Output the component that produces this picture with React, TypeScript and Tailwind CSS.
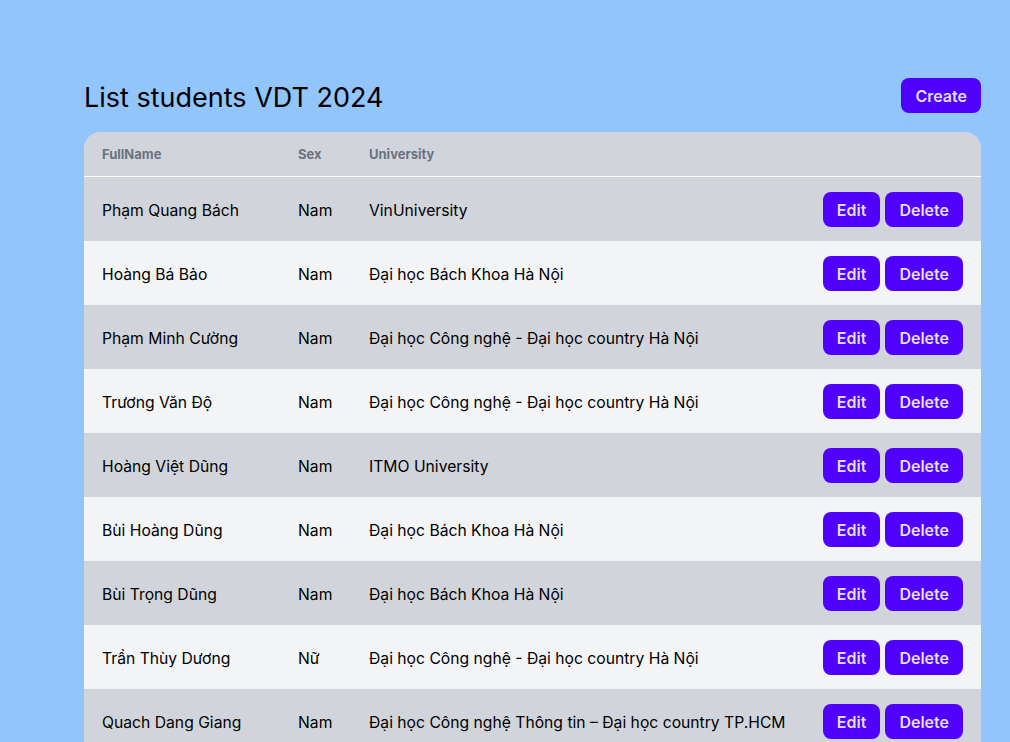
const students = [
  { name: 'Phạm Quang Bách', sex: 'Nam', university: 'VinUniversity' },
  { name: 'Hoàng Bá Bảo', sex: 'Nam', university: 'Đại học Bách Khoa Hà Nội' },
  { name: 'Phạm Minh Cường', sex: 'Nam', university: 'Đại học Công nghệ - Đại học country Hà Nội' },
  { name: 'Trương Văn Độ', sex: 'Nam', university: 'Đại học Công nghệ - Đại học country Hà Nội' },
  { name: 'Hoàng Việt Dũng', sex: 'Nam', university: 'ITMO University' },
  { name: 'Bùi Hoàng Dũng', sex: 'Nam', university: 'Đại học Bách Khoa Hà Nội' },
  { name: 'Bùi Trọng Dũng', sex: 'Nam', university: 'Đại học Bách Khoa Hà Nội' },
  { name: 'Trần Thùy Dương', sex: 'Nữ', university: 'Đại học Công nghệ - Đại học country Hà Nội' },
  { name: 'Quach Dang Giang', sex: 'Nam', university: 'Đại học Công nghệ Thông tin – Đại học country TP.HCM' },
  { name: 'Nguyễn Văn Hải', sex: 'Nam', university: 'Đại học Bách Khoa Hà Nội' },
];

const Button = (props: { children: string }) => {
  return (
    <button className="h-[35px] rounded-lg bg-[#4f00ff] px-3.5 text-base font-semibold text-[#e4defc]">
      {props.children}
    </button>
  );
};

export default function App() {
  return (
    <div className="min-h-screen bg-[#93c5fd] pl-[84px] pr-[29px] pt-[78px] font-['Inter',sans-serif] text-black">
      <div className="flex h-[35px] items-center justify-between">
        <h1 className="pt-[3px] text-[27px] leading-[35px] font-normal">List students VDT 2024</h1>
        <Button>Create</Button>
      </div>
      <div className="mt-[19px] overflow-hidden rounded-t-2xl bg-[#d1d5db]">
        <div className="flex h-[45px] items-center border-b border-white pt-[2px] text-[13px] font-bold text-gray-500">
          <div className="w-[214px] pl-[18px]">FullName</div>
          <div className="w-[71px]">Sex</div>
          <div>University</div>
        </div>
        {students.map((s, i) => (
          <div
            key={i}
            className={`flex h-16 items-center text-[15.7px] ${i % 2 === 0 ? 'bg-[#d1d5db]' : 'bg-[#f3f4f6]'}`}
          >
            <div className="w-[214px] pl-[18px] pt-[3px]">{s.name}</div>
            <div className="w-[71px] pt-[3px]">{s.sex}</div>
            <div className="flex-1 pt-[3px]">{s.university}</div>
            <div className="flex gap-[5px] pr-[18px] pt-[1px]">
              <Button>Edit</Button>
              <Button>Delete</Button>
            </div>
          </div>
        ))}
      </div>
    </div>
  );
}
